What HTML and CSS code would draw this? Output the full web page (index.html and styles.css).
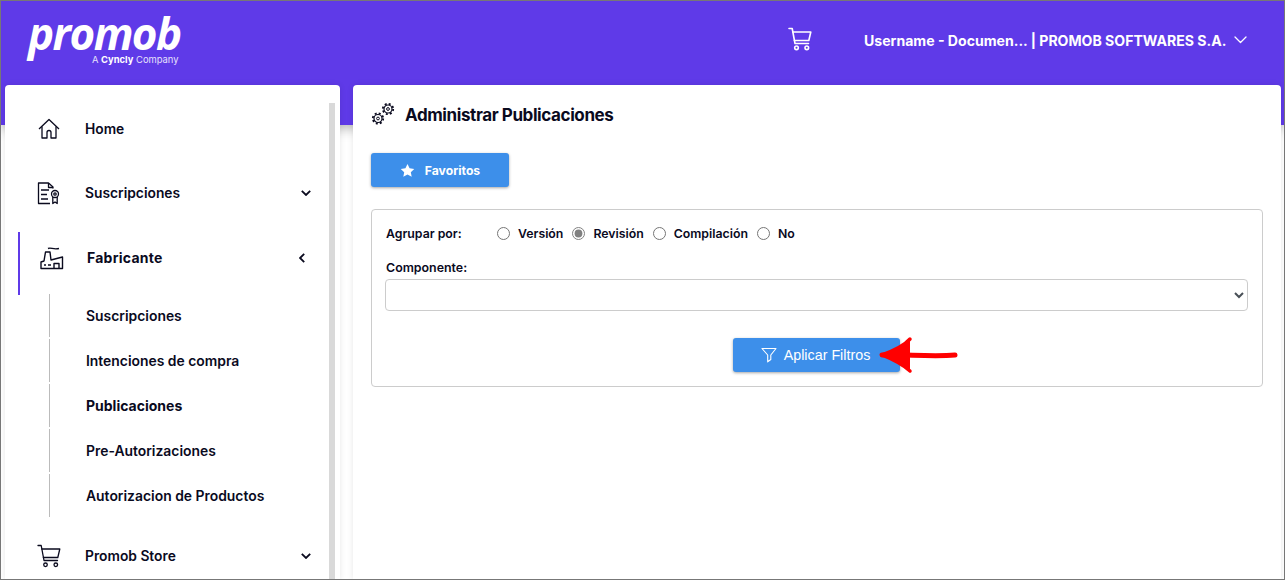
FILE: index.html
```html
<!DOCTYPE html>
<html lang="es">
<head>
<meta charset="utf-8">
<title>Administrar Publicaciones</title>
<link rel="stylesheet" href="styles.css">
</head>
<body>
<div class="frame">
  <header class="topbar">
    <div class="logo">
      <span class="logo-word">promob</span>
      <span class="logo-sub">A <b>Cyncly</b> Company</span>
    </div>
    <svg class="top-cart" viewBox="0 0 24 24" width="24" height="24" fill="none" stroke="#fff" stroke-width="1.6" stroke-linecap="round" stroke-linejoin="round"><path d="M1 1.5h3.2L7 16.5h13.5"/><path d="M4.8 5h18l-2 8.5H6.4"/><circle cx="8.5" cy="20.8" r="1.8"/><circle cx="18.8" cy="20.8" r="1.8"/></svg>
    <span class="user">Username - Documen... | PROMOB SOFTWARES S.A.</span>
    <svg class="top-chev" viewBox="0 0 13 8" width="13" height="8" fill="none" stroke="#fff" stroke-width="1.3" stroke-linecap="round" stroke-linejoin="round"><path d="M1 1l5.500 5.500L12 1"/></svg>
  </header>
  <div class="layout">
    <aside class="sidebar">
      <nav class="nav">
        <a class="row">
          <svg class="ico" viewBox="0 0 22 22" width="22" height="22" fill="none" stroke="#0a0a1e" stroke-width="1.300" stroke-linejoin="round"><path d="M1 11L11 1.500 21 11"/><path d="M4 8.500V20h5v-5.500a2 2 0 0 1 4 0V20h5V8.500"/></svg>
          <span class="label">Home</span>
        </a>
        <a class="row">
          <svg class="ico" viewBox="0 0 24 24" width="24" height="24" fill="none" stroke="#0a0a1e" stroke-width="1.300" stroke-linejoin="round"><path d="M16 7.500V6l-4.500-4H1.500v20.500H13"/><path d="M11.500 2v4.500H16"/><path d="M4 9h8M4 13.500h6M4 18h7"/><circle cx="18" cy="13" r="3.500"/><circle cx="18" cy="13" r="1.200"/><path d="M15.800 16v6.500l2.200-1.500 2.200 1.500V16"/></svg>
          <span class="label">Suscripciones</span>
          <svg class="chev" viewBox="0 0 10 6" width="10" height="6" fill="none" stroke="#0a0a1e" stroke-width="1.800"><path d="M.8.8L5 5 9.200.8"/></svg>
        </a>
        <a class="row row-active">
          <svg class="ico" viewBox="0 0 24 24" width="24" height="24" fill="none" stroke="#0a0a1e" stroke-width="1.400" stroke-linejoin="round"><path d="M1 22.500V16l3-1 1.500-9H10l1 8 11.500-3v11.500z"/><path d="M4 19h2M8 19h3"/><path d="M14 22.500v-5h5v5"/><path d="M8 2.500c3-1.500 5 1.500 11 0"/></svg>
          <span class="label">Fabricante</span>
          <svg class="chev-left" viewBox="0 0 6 10" width="6" height="10" fill="none" stroke="#0a0a1e" stroke-width="1.800"><path d="M5.200.8L1 5l4.200 4.200"/></svg>
        </a>
        <ul class="sub">
          <li class="sub-item">Suscripciones</li>
          <li class="sub-item">Intenciones de compra</li>
          <li class="sub-item sub-current">Publicaciones</li>
          <li class="sub-item">Pre-Autorizaciones</li>
          <li class="sub-item">Autorizacion de Productos</li>
        </ul>
        <a class="row row-store">
          <svg class="ico" viewBox="0 0 24 24" width="24" height="24" fill="none" stroke="#0a0a1e" stroke-width="1.300" stroke-linecap="round" stroke-linejoin="round"><path d="M1 1.500h3.200L7 16.500h13.500"/><path d="M4.800 5h18l-2 8.500H6.400"/><circle cx="8.500" cy="20.800" r="1.800"/><circle cx="18.800" cy="20.800" r="1.800"/></svg>
          <span class="label">Promob Store</span>
          <svg class="chev" viewBox="0 0 10 6" width="10" height="6" fill="none" stroke="#0a0a1e" stroke-width="1.800"><path d="M.8.8L5 5 9.200.8"/></svg>
        </a>
      </nav>
      <div class="scrollbar"></div>
    </aside>
    <main class="content">
      <div class="title-row">
        <svg class="gears" viewBox="0 0 24 24" width="24" height="24" fill="none" stroke="#0a0a1e">
          <circle cx="7" cy="16.500" r="4" stroke-width="1.200"/><circle cx="7" cy="16.500" r="5.200" stroke-width="1.800" stroke-dasharray="2 2.100"/><circle cx="7" cy="16.500" r="1.400" stroke-width="1"/>
          <circle cx="17" cy="7" r="4" stroke-width="1.200"/><circle cx="17" cy="7" r="5.200" stroke-width="1.800" stroke-dasharray="2 2.100"/><circle cx="17" cy="7" r="1.400" stroke-width="1"/>
        </svg>
        <h1 class="title">Administrar Publicaciones</h1>
      </div>
      <button class="btn btn-fav" type="button">
        <svg viewBox="0 0 24 24" width="15" height="15" fill="#fff"><path d="M12 1.500l3.300 6.900 7.500 1-5.500 5.200 1.400 7.500L12 18.500l-6.700 3.600 1.400-7.500L1.200 9.400l7.500-1z"/></svg>
        <span>Favoritos</span>
      </button>
      <section class="filters">
        <div class="group">
          <span class="group-label">Agrupar por:</span>
          <label class="opt"><input type="radio" name="g"><span>Versión</span></label>
          <label class="opt"><input type="radio" name="g" checked><span>Revisión</span></label>
          <label class="opt"><input type="radio" name="g"><span>Compilación</span></label>
          <label class="opt"><input type="radio" name="g"><span>No</span></label>
        </div>
        <label class="field-label" for="comp">Componente:</label>
        <select class="select" id="comp"><option></option></select>
        <div class="actions">
          <button class="btn btn-apply" type="button">
            <svg viewBox="0 0 16 16" width="16" height="16" fill="none" stroke="#fff" stroke-width="1.100" stroke-linejoin="round"><path d="M1 1.500h14L9.800 8v4.500L6.700 14.800V8z"/></svg>
            <span>Aplicar Filtros</span>
            <svg class="arrow" viewBox="0 0 80 38" width="80" height="38" fill="none" stroke="#f00" stroke-width="5" stroke-linecap="round" stroke-linejoin="round"><path d="M3 19c20-1 50 2 73 0"/><path d="M31 3C25 10 14 15 3 19c10 4 20 9 28 16" fill="#f00" stroke-width="3.500"/></svg>
          </button>
        </div>
      </section>
    </main>
  </div>
</div>
</body>
</html>
```
FILE: styles.css
```css
* { box-sizing: border-box; }
html, body { margin: 0; padding: 0; }
body { font-family: "Inter", "Liberation Sans", sans-serif; color: #0a0a1e; background: #fff; overflow: hidden; }
.frame { width: 1285px; height: 580px; border: 1px solid #777; overflow: hidden; background: #fff; }

.topbar { height: 124px; background: #5f3ae8; box-shadow: 0 3px 12px rgba(0,0,0,.3); display: flex; align-items: flex-start; color: #fff; }
.logo { width: 180px; margin-left: 26px; margin-top: 11px; display: flex; flex-direction: column; flex: none; }
.logo-word { font-family: "Open Sans", sans-serif; font-style: italic; font-weight: 700; font-size: 44px; line-height: 43px; letter-spacing: -1.6px; padding-left: 1px; color: #fff; }
.logo-sub { font-family: "Inter", sans-serif; font-size: 9.400px; line-height: 10px; margin-left: 65px; color: #e6e0fb; white-space: nowrap; }
.logo-sub b { font-weight: 700; color: #fff; }
.top-cart { margin-left: 581px; margin-top: 26px; flex: none; }
.user { margin-left: 52px; margin-top: 31px; font-size: 14.080px; line-height: 18px; font-weight: 700; white-space: nowrap; width: 362px; flex: none; }
.top-chev { margin-left: 8px; margin-top: 35px; flex: none; }

.layout { display: flex; margin-top: -40px; height: 495px; padding-left: 4px; padding-right: 3px; gap: 13px; }
.sidebar { width: 335px; flex: none; background: #fff; border-radius: 4px 4px 0 0; box-shadow: 0 0 6px rgba(0,0,0,.1); display: flex; }
.nav { flex: 1; padding-top: 11px; min-width: 0; }
.row { display: flex; align-items: center; height: 64px; padding-left: 32px; padding-top: 1px; font-size: 13.800px; font-weight: 600; }
.ico { flex: none; width: 24px; margin-right: 24px; }
.label { flex: 1; }
.chev { margin-right: 18px; flex: none; }
.chev-left { margin-right: 24px; flex: none; }
.row-active { height: 63px; margin-top: 8px; margin-left: 13px; padding-left: 20px; padding-bottom: 13px; border-left: 2px solid #5f3ae8; font-weight: 700; font-size: 14px; letter-spacing: .25px; }
.row-active .ico { margin-right: 23px; }
.sub { list-style: none; margin: -1px 0 0; padding: 0 0 0 44px; }
.sub-item { height: 43px; margin-bottom: 2px; padding-left: 36px; display: flex; align-items: center; font-size: 13.900px; font-weight: 600; border-left: 1px solid #bbb; }
.sub-current { font-weight: 700; font-size: 14px; }
.row-store { margin-top: 6px; }
.scrollbar { width: 6px; margin: 18px 5px 0 0; background: #d9d9d9; flex: none; }

.content { flex: 1; background: #fff; border-radius: 4px 4px 0 0; box-shadow: 0 0 6px rgba(0,0,0,.1); padding: 0 18px; min-width: 0; }
.title-row { display: flex; align-items: center; height: 58px; gap: 10px; }
.gears { flex: none; }
.title { margin: 2px 0 0; font-size: 17px; font-weight: 700; letter-spacing: -.4px; white-space: nowrap; }
.btn { border: 0; background: #3d8fea; color: #fff; border-radius: 3px; box-shadow: 0 1px 3px rgba(0,0,0,.35); display: flex; align-items: center; justify-content: center; padding: 0; cursor: pointer; }
.btn-fav { width: 138px; height: 34px; margin-top: 10px; gap: 10px; font-family: "Inter", sans-serif; font-weight: 700; font-size: 12.200px; }
.filters { margin-top: 22px; width: 892px; height: 178px; border: 1px solid #ccc; border-radius: 4px; padding: 13px 14px 0 13px; }
.group { display: flex; align-items: center; height: 20px; font-size: 12.300px; font-weight: 600; }
.group-label { width: 111px; flex: none; margin-left: 1px; }
.opt { display: flex; align-items: center; margin-right: 9px; }
.opt input { width: 13px; height: 13px; margin: 0 8px 0 0; accent-color: #808080; flex: none; }
.field-label { display: block; margin-top: 17px; margin-left: 1px; height: 16px; line-height: 16px; font-size: 12.400px; font-weight: 600; }
.select { display: block; width: 863px; height: 32px; margin-top: 3px; border: 1px solid #ccc; border-radius: 4px; background: #fff; color: #495057; }
.actions { display: flex; justify-content: center; margin-top: 27px; }
.btn-apply { position: relative; width: 167px; height: 34px; gap: 7px; font-family: "Liberation Sans", sans-serif; font-size: 14.300px; padding-right: 2px; }
.arrow { position: absolute; left: 146px; top: -2px; }
```
